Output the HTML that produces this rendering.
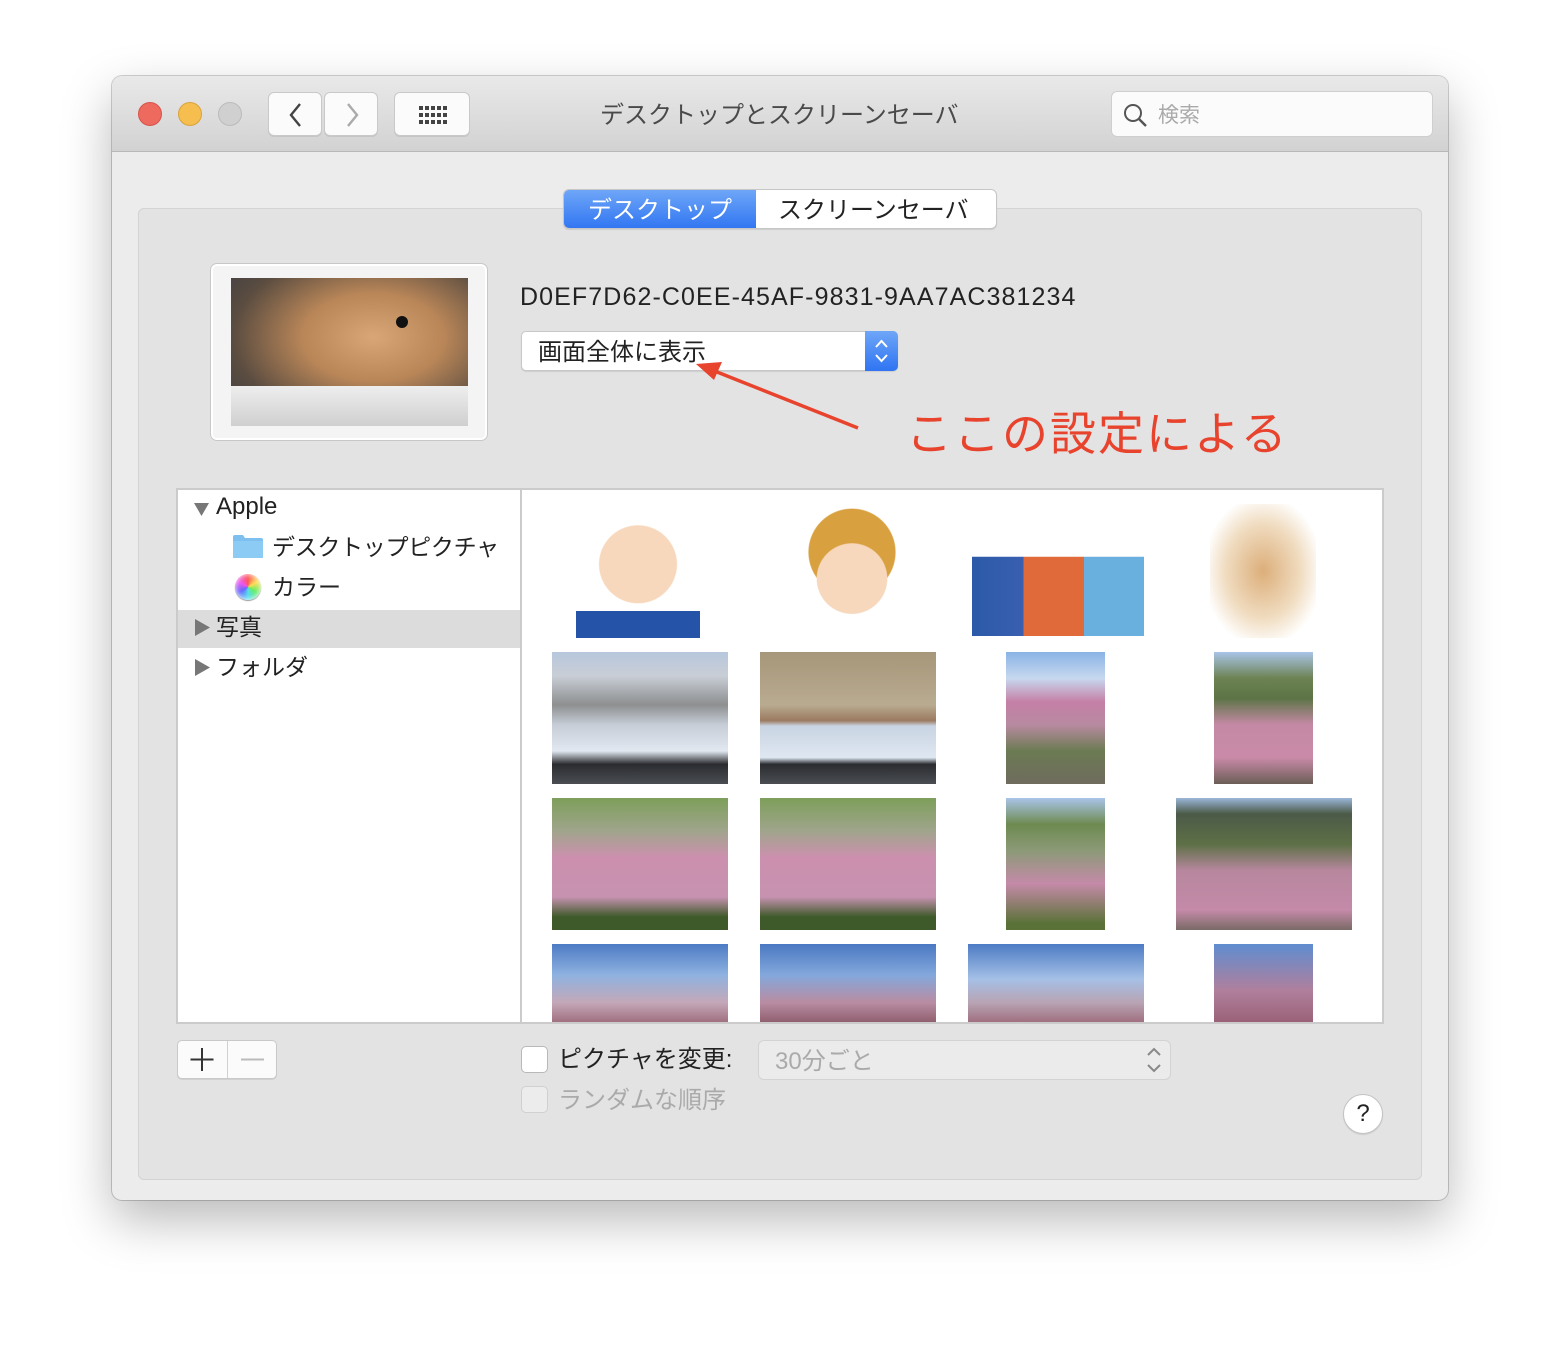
<!DOCTYPE html>
<html><head><meta charset="utf-8">
<style>
*{box-sizing:border-box;margin:0;padding:0}
body{width:1560px;height:1348px;background:#fff;font-family:"Liberation Sans","Noto Sans CJK JP",sans-serif;position:relative;overflow:hidden}
.abs{position:absolute}
.win{left:112px;top:76px;width:1336px;height:1124px;border-radius:10px;background:#ececec;box-shadow:0 20px 50px rgba(0,0,0,.28),0 0 0 1px rgba(0,0,0,.18);overflow:hidden}
.tb{left:0;top:0;width:1336px;height:76px;background:linear-gradient(#e9e9e9,#d2d2d2);border-bottom:1px solid #b8b8b8}
.dot{width:24px;height:24px;border-radius:50%;top:26px}
.btn{background:#fbfbfb;border:1px solid #c9c9c9;border-radius:6px;box-shadow:0 1px 0 rgba(0,0,0,.08)}
.t{color:#222;white-space:nowrap}
.ph{position:absolute;overflow:hidden}
</style></head><body>
<div class="abs win">
 <div class="abs tb">
  <div class="abs dot" style="left:26px;background:#ee6a5f;border:1px solid #d6534a"></div>
  <div class="abs dot" style="left:66px;background:#f5be4f;border:1px solid #d9a23a"></div>
  <div class="abs dot" style="left:106px;background:#d0d0d0;border:1px solid #bbb"></div>
  <div class="abs btn" style="left:156px;top:16px;width:54px;height:44px"><svg width="54" height="44"><path d="M31 11 L22 22 L31 33" stroke="#444" stroke-width="2.4" fill="none"/></svg></div>
  <div class="abs btn" style="left:212px;top:16px;width:54px;height:44px"><svg width="54" height="44"><path d="M23 11 L32 22 L23 33" stroke="#aaa" stroke-width="2.4" fill="none"/></svg></div>
  <div class="abs btn" style="left:282px;top:16px;width:76px;height:44px"><svg width="76" height="44"><g fill="#444"><rect x="24" y="13" width="4" height="4"/><rect x="30" y="13" width="4" height="4"/><rect x="36" y="13" width="4" height="4"/><rect x="42" y="13" width="4" height="4"/><rect x="48" y="13" width="4" height="4"/><rect x="24" y="20" width="4" height="4"/><rect x="30" y="20" width="4" height="4"/><rect x="36" y="20" width="4" height="4"/><rect x="42" y="20" width="4" height="4"/><rect x="48" y="20" width="4" height="4"/><rect x="24" y="27" width="4" height="4"/><rect x="30" y="27" width="4" height="4"/><rect x="36" y="27" width="4" height="4"/><rect x="42" y="27" width="4" height="4"/><rect x="48" y="27" width="4" height="4"/></g></svg></div>
  <div class="abs t" style="left:488px;top:19px;font-size:24px;color:#4a4a4a">デスクトップとスクリーンセーバ</div>
  <div class="abs" style="left:999px;top:15px;width:322px;height:46px;background:#fbfbfb;border:1px solid #cfcfcf;border-radius:6px"><svg class="abs" style="left:10px;top:10px" width="28" height="28"><circle cx="11" cy="11" r="8" stroke="#555" stroke-width="2" fill="none"/><path d="M17 17 L24 24" stroke="#555" stroke-width="2.4"/></svg><div class="abs" style="left:46px;top:7px;font-size:21px;color:#aaa">検索</div></div>
 </div>
 <div class="abs" style="left:26px;top:132px;width:1284px;height:972px;background:#e3e3e3;border:1px solid #d3d3d3;border-radius:6px"></div>
 <div class="abs" style="left:451px;top:113px;width:434px;height:40px;border-radius:6px;background:#fff;border:1px solid #c6c6c6;box-shadow:0 1px 1px rgba(0,0,0,.1);overflow:hidden">
  <div class="abs" style="left:0;top:0;width:192px;height:40px;background:linear-gradient(#6ea6f7,#2f74f2)"></div>
  <div class="abs t" style="left:24px;top:0px;font-size:24px;color:#fff">デスクトップ</div>
  <div class="abs t" style="left:214px;top:0px;font-size:24px">スクリーンセーバ</div>
 </div>
 <div class="abs" style="left:99px;top:188px;width:276px;height:176px;background:#f4f4f4;border:2px solid #fff;border-radius:6px;box-shadow:0 0 0 1px #c8c8c8"></div>
 <div class="abs" style="left:119px;top:202px;width:237px;height:148px;background:radial-gradient(ellipse at 60% 40%,#d9a678 0,#b98658 35%,#5a4c40 70%,#3a3c44 100%)"><div class="abs" style="left:0;top:108px;width:237px;height:40px;background:linear-gradient(#eee,#cfcfcf)"></div><div class="abs" style="left:165px;top:38px;width:12px;height:12px;background:#111;border-radius:50%"></div></div>
 <div class="abs t" style="left:408px;top:207px;font-size:25px;letter-spacing:1.1px">D0EF7D62-C0EE-45AF-9831-9AA7AC381234</div>
 <div class="abs" style="left:409px;top:255px;width:377px;height:40px;background:#fff;border:1px solid #c8c8c8;border-radius:5px;box-shadow:0 1px 1px rgba(0,0,0,.1)"><div class="abs t" style="left:16px;top:0px;font-size:24px">画面全体に表示</div><div class="abs" style="right:-1px;top:-1px;width:33px;height:40px;background:linear-gradient(#6ea6f7,#2f74f2);border-radius:0 5px 5px 0"><svg width="33" height="40"><path d="M11 16 L16.5 10 L22 16 M11 24 L16.5 30 L22 24" stroke="#fff" stroke-width="2" fill="none"/></svg></div></div>
 <svg class="abs" style="left:570px;top:280px" width="190" height="80"><path d="M176 72 L30 14" stroke="#e8432d" stroke-width="3.5"/><path d="M14 8 L40 6 L32 24 Z" fill="#e8432d"/></svg>
 <div class="abs t" style="left:794px;top:322px;font-size:46px;color:#e8432d;letter-spacing:2px">ここの設定による</div>
 <div class="abs" style="left:64px;top:412px;width:1208px;height:536px;background:#fff;border:2px solid #cbcbcb"></div>
 <div class="abs" style="left:408px;top:414px;width:2px;height:532px;background:#cbcbcb"></div>
 <div class="abs" style="left:66px;top:534px;width:342px;height:38px;background:#dcdcdc"></div>
 <svg class="abs" style="left:80px;top:424px" width="20" height="20"><path d="M2 3 L17 3 L9.5 16Z" fill="#777"/></svg>
 <div class="abs t" style="left:104px;top:417px;font-size:24px">Apple</div>
 <svg class="abs" style="left:120px;top:458px" width="32" height="26"><path d="M1 3 Q1 1 3 1 L11 1 L13 4 L29 4 Q31 4 31 6 L31 24 L1 24Z" fill="#7dc0ef"/><rect x="1" y="7" width="30" height="17" fill="#8ccbf4"/></svg>
 <div class="abs t" style="left:160px;top:452px;font-size:23px;letter-spacing:-0.3px">デスクトップピクチャ</div>
 <div class="abs" style="left:123px;top:498px;width:26px;height:26px;border-radius:50%;background:conic-gradient(#f55,#fd5,#6e6,#5de,#66f,#e5e,#f55);box-shadow:inset 0 0 6px #fff,0 1px 1px #999"></div>
 <div class="abs t" style="left:160px;top:492px;font-size:23px">カラー</div>
 <svg class="abs" style="left:82px;top:542px" width="20" height="20"><path d="M1 1 L16 9.5 L1 18Z" fill="#777"/></svg>
 <div class="abs t" style="left:104px;top:532px;font-size:23px">写真</div>
 <svg class="abs" style="left:82px;top:582px" width="20" height="20"><path d="M1 1 L16 9.5 L1 18Z" fill="#777"/></svg>
 <div class="abs t" style="left:104px;top:572px;font-size:23px">フォルダ</div>
 <div class="ph" style="left:464px;top:428px;width:124px;height:134px;background:radial-gradient(circle at 50% 45%,#f7d8bd 0,#f7d8bd 40%,transparent 41%),linear-gradient(transparent 80%,#2553a8 80%)"></div>
 <div class="ph" style="left:684px;top:430px;width:112px;height:132px;background:radial-gradient(circle at 50% 55%,#f7d8bd 0,#f7d8bd 38%,transparent 39%),radial-gradient(circle at 50% 35%,#d9a040 0,#d9a040 42%,transparent 43%)"></div>
 <div class="ph" style="left:860px;top:428px;width:172px;height:132px;background:linear-gradient(90deg,#2b5aa8 0,#3a5fb0 30%,#e06a3a 30%,#e06a3a 65%,#6ab0de 65%,#6ab0de 100%);clip-path:inset(40% 0 0 0)"></div>
 <div class="ph" style="left:1098px;top:428px;width:106px;height:134px;background:radial-gradient(ellipse at 50% 50%,#dcae7a 0,#f0dcc0 50%,#fff 80%)"></div>
 <div class="ph" style="left:440px;top:576px;width:176px;height:132px;background:linear-gradient(#b7c7dd 0,#c9ced6 18%,#8d8f90 40%,#c6cdd6 55%,#e1e8f0 75%,#2a2c30 85%,#4a4d52 100%)"></div>
 <div class="ph" style="left:648px;top:576px;width:176px;height:132px;background:linear-gradient(#a6967a 0,#b9ab90 40%,#9b7a60 52%,#c8d4e2 56%,#dfe7f2 80%,#2a2c30 85%,#4a4d52 100%)"></div>
 <div class="ph" style="left:894px;top:576px;width:99px;height:132px;background:linear-gradient(#8ab3e6 0,#c7d8ee 20%,#c57fa6 38%,#b88aa1 55%,#6b7b52 75%,#6f6b5e 100%)"></div>
 <div class="ph" style="left:1102px;top:576px;width:99px;height:132px;background:linear-gradient(#a9c4e8 0,#6c8252 20%,#5c7446 35%,#c489a5 55%,#c98aa8 80%,#6b5e56 100%)"></div>
 <div class="ph" style="left:440px;top:722px;width:176px;height:132px;background:linear-gradient(#7d9f5a 0,#a0a58c 25%,#cc90ae 45%,#c692b0 75%,#3f5a2a 90%)"></div>
 <div class="ph" style="left:648px;top:722px;width:176px;height:132px;background:linear-gradient(#7d9f5a 0,#a0a58c 25%,#cc90ae 45%,#c692b0 75%,#3f5a2a 90%)"></div>
 <div class="ph" style="left:894px;top:722px;width:99px;height:132px;background:linear-gradient(#a9c4e8 0,#6d8a50 20%,#8c9a78 40%,#c48aa8 65%,#5a7238 95%)"></div>
 <div class="ph" style="left:1064px;top:722px;width:176px;height:132px;background:linear-gradient(#9bb6d8 0,#4b5a48 12%,#5d7046 35%,#b7879e 55%,#c48aa8 85%,#7a6a66 100%)"></div>
 <div class="ph" style="left:440px;top:868px;width:176px;height:78px;background:linear-gradient(#4d7bc4 0,#8fb2e0 40%,#c4a8b8 75%,#a07080 100%)"></div>
 <div class="ph" style="left:648px;top:868px;width:176px;height:78px;background:linear-gradient(#4a78c2 0,#84a8dc 40%,#b98ca2 75%,#906070 100%)"></div>
 <div class="ph" style="left:856px;top:868px;width:176px;height:78px;background:linear-gradient(#4d7bc4 0,#a5c0e6 45%,#b8a4b4 75%,#a07080 100%)"></div>
 <div class="ph" style="left:1102px;top:868px;width:99px;height:78px;background:linear-gradient(#5f8dd0 0,#b07f9c 60%,#9a6278 100%)"></div>
 <div class="abs btn" style="left:65px;top:964px;width:100px;height:39px;border-radius:5px"><div class="abs" style="left:49px;top:0;width:1px;height:37px;background:#d0d0d0"></div><svg width="98" height="37"><path d="M24 7 V30 M12.5 18.5 H35.5" stroke="#333" stroke-width="2"/><path d="M63 18.5 H86" stroke="#bbb" stroke-width="2"/></svg></div>
 <div class="abs" style="left:409px;top:970px;width:27px;height:27px;background:#fff;border:1px solid #b8b8b8;border-radius:5px"></div>
 <div class="abs t" style="left:446px;top:963px;font-size:24px">ピクチャを変更:</div>
 <div class="abs" style="left:646px;top:964px;width:413px;height:40px;background:#ebebeb;border:1px solid #d3d3d3;border-radius:6px"><div class="abs t" style="left:16px;top:0px;font-size:24px;color:#aaa">30分ごと</div><svg class="abs" style="right:4px;top:0" width="24" height="38"><path d="M6 14 L12 8 L18 14 M6 24 L12 30 L18 24" stroke="#888" stroke-width="2" fill="none"/></svg></div>
 <div class="abs" style="left:409px;top:1010px;width:27px;height:27px;background:#ececec;border:1px solid #d0d0d0;border-radius:5px"></div>
 <div class="abs t" style="left:446px;top:1004px;font-size:24px;color:#aaa">ランダムな順序</div>
 <div class="abs" style="left:1231px;top:1018px;width:40px;height:40px;border-radius:50%;background:#fff;border:1px solid #c3c3c3;box-shadow:0 1px 1px rgba(0,0,0,.1);font-size:24px;text-align:center;line-height:38px;color:#222">?</div>
</div>
</body></html>
